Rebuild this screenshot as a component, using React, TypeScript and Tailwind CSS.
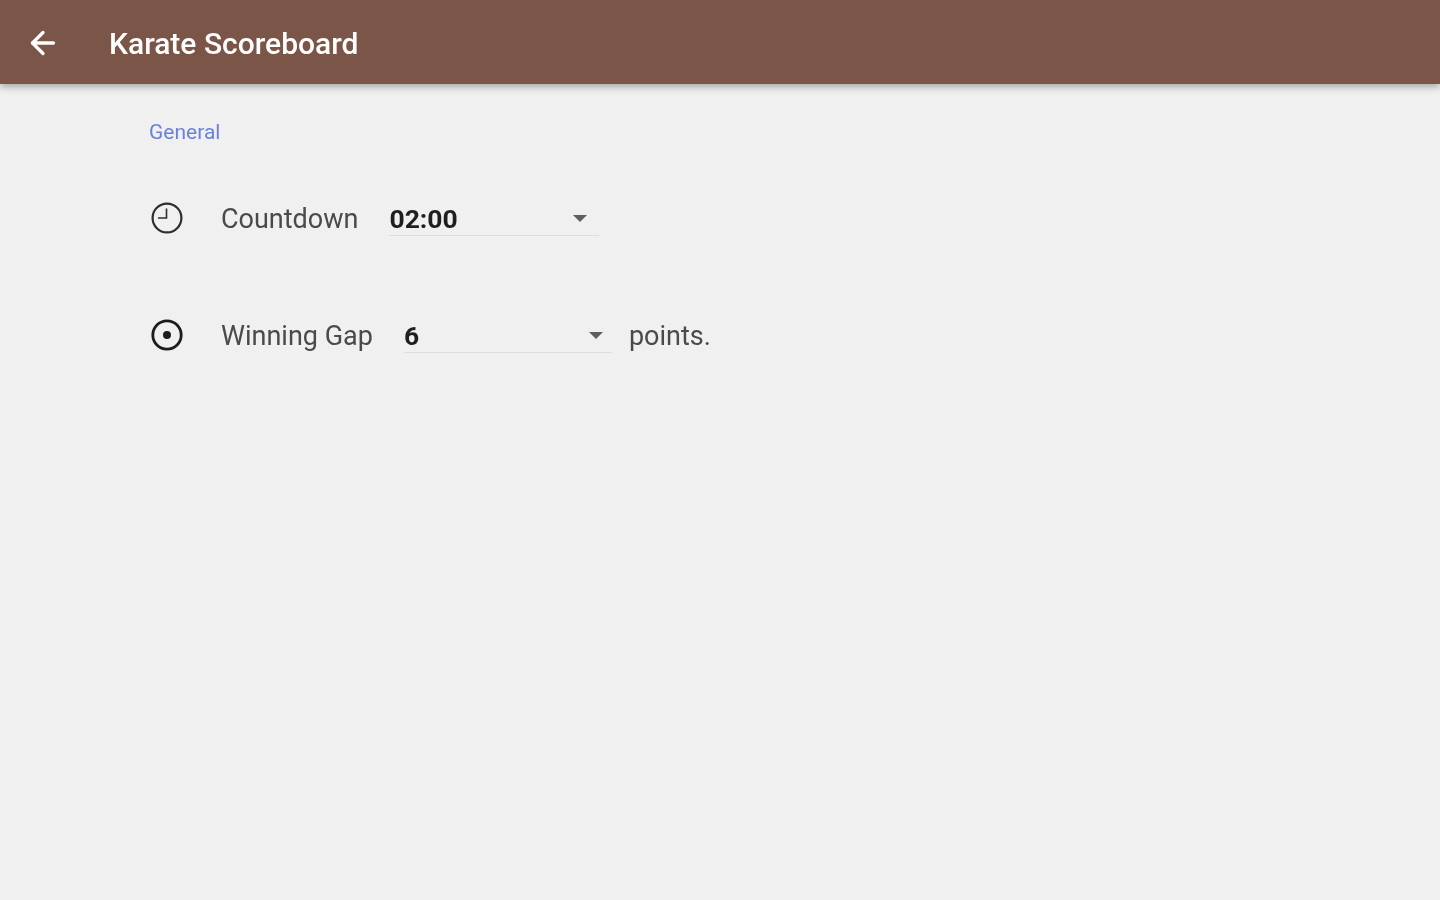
import React from 'react';
import { ArrowLeft } from 'lucide-react';

const ClockIcon = () => (
  <svg viewBox="0 0 32 32" className="h-8 w-8 shrink-0 text-[#2e2e2e]" fill="none" stroke="currentColor">
    <circle cx="16" cy="16" r="14.4" strokeWidth="2.2" />
    <path d="M15.5 6.5V16H7" strokeWidth="1.6" />
  </svg>
);

const TargetIcon = () => (
  <svg viewBox="0 0 32 32" className="h-8 w-8 shrink-0 text-[#1c1c1c]" fill="none" stroke="currentColor">
    <circle cx="16" cy="16" r="14.2" strokeWidth="2.8" />
    <circle cx="16" cy="16" r="4" fill="currentColor" stroke="none" />
  </svg>
);

const Select = ({ value, width, padding }: { value: string; width: string; padding: string }) => (
  <div className={`flex h-[34px] items-center justify-between border-b border-[#dedede] ${padding} ${width}`}>
    <span className="mt-[2px] text-[26.5px] font-bold leading-none text-[#1f1f1f]">{value}</span>
    <span className="h-0 w-0 border-x-[7px] border-t-[7px] border-x-transparent border-t-[#5f5f5f]" />
  </div>
);

export default function App() {
  return (
    <div className="flex h-[900px] w-[1440px] flex-col overflow-hidden bg-[#f0f0f0] font-['Roboto',sans-serif]">
      <header className="z-10 flex h-[84px] shrink-0 items-center bg-[#7b5547] pl-[25px] shadow-[0_3px_7px_rgba(0,0,0,0.3)]">
        <ArrowLeft className="mt-[1px] h-[36px] w-[36px] text-white blur-[0.6px]" strokeWidth={2.2} />
        <h1 className="ml-[48px] mt-[2px] text-[30px] font-medium text-white blur-[0.6px]">Karate Scoreboard</h1>
      </header>

      <main className="pl-[149px] blur-[0.6px]">
        <p className="mt-[36px] text-[21px] leading-6 text-[#6b82dc]">General</p>

        <div className="mt-[58px] flex h-[34px] items-center">
          <div className="mb-[2px] ml-[2px]"><ClockIcon /></div>
          <span className="ml-[38px] text-[27px] text-[#4a4a4a]">Countdown</span>
          <div className="ml-[31px]"><Select value="02:00" width="w-[210px]" padding="pr-[12px]" /></div>
        </div>

        <div className="mt-[83px] flex h-[34px] items-center">
          <div className="mb-[2px] ml-[2px]"><TargetIcon /></div>
          <span className="ml-[38px] text-[27px] text-[#4a4a4a]">Winning Gap</span>
          <div className="ml-[31px]"><Select value="6" width="w-[208px]" padding="pr-[9px]" /></div>
          <span className="ml-[17px] text-[27px] text-[#4a4a4a]">points.</span>
        </div>
      </main>
    </div>
  );
}
